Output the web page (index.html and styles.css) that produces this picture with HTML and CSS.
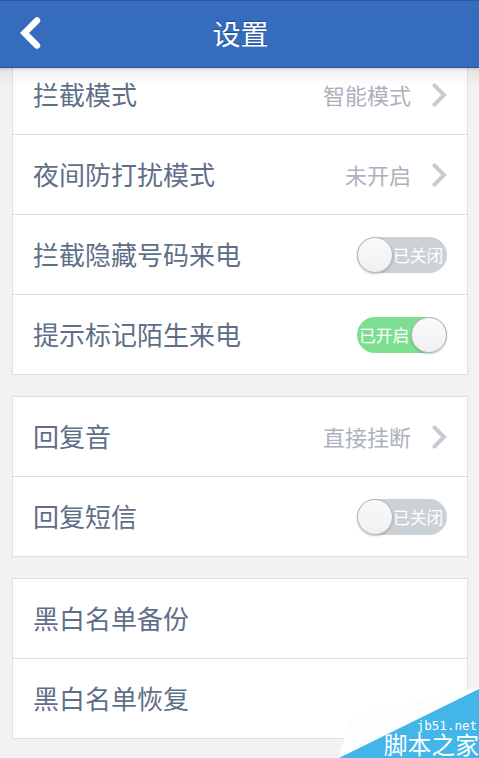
FILE: index.html
```html
<!DOCTYPE html>
<html lang="zh-CN">
<head>
<meta charset="utf-8">
<title>设置</title>
<link rel="stylesheet" href="styles.css">
</head>
<body>
<div class="screen">
  <header class="header">
    <svg class="back" width="22" height="32" viewBox="0 0 22 32"><path d="M17 3.500 4.500 16 17 28.500"/></svg>
    <h1 class="title">设置</h1>
  </header>
  <main class="content">
    <section class="card">
      <div class="row"><span class="label">拦截模式</span><span class="value">智能模式</span><svg class="chevron" width="15" height="24" viewBox="0 0 15 24"><path d="M2.500 2.500 12 12l-9.500 9.500"/></svg></div>
      <div class="row"><span class="label">夜间防打扰模式</span><span class="value">未开启</span><svg class="chevron" width="15" height="24" viewBox="0 0 15 24"><path d="M2.500 2.500 12 12l-9.500 9.500"/></svg></div>
      <div class="row"><span class="label">拦截隐藏号码来电</span><span class="toggle"><span class="knob"></span><span class="state">已关闭</span></span></div>
      <div class="row"><span class="label">提示标记陌生来电</span><span class="toggle on"><span class="knob"></span><span class="state">已开启</span></span></div>
    </section>
    <section class="card">
      <div class="row"><span class="label">回复音</span><span class="value">直接挂断</span><svg class="chevron" width="15" height="24" viewBox="0 0 15 24"><path d="M2.500 2.500 12 12l-9.500 9.500"/></svg></div>
      <div class="row"><span class="label">回复短信</span><span class="toggle"><span class="knob"></span><span class="state">已关闭</span></span></div>
    </section>
    <section class="card">
      <div class="row"><span class="label">黑白名单备份</span></div>
      <div class="row"><span class="label">黑白名单恢复</span></div>
    </section>
  </main>
  <div class="watermark">
    <svg class="corner" width="141" height="71" viewBox="0 0 141 71"><path class="paper" d="M0 71 14 28 141 0v4z"/><path class="ribbon" d="M1 71 141 2v69z"/></svg>
    <div class="site">jb51.net</div>
    <div class="brand">脚本之家</div>
  </div>
</div>
</body>
</html>
```
FILE: styles.css
```css
* { box-sizing: border-box; }
body {
  margin: 0;
  background: #f2f2f2;
  font-family: "Noto Sans CJK SC", sans-serif;
}
.screen {
  position: relative;
  display: flex;
  flex-direction: column;
  height: 758px;
  overflow: hidden;
}
.header {
  flex: none;
  display: flex;
  align-items: center;
  height: 68px;
  padding: 0 20px;
  background: #356cbe;
  border-top: 1px solid #2b569b;
  border-bottom: 1px solid #27539a;
}
.back {
  flex: none;
  margin-bottom: 3px;
  fill: none;
  stroke: #fff;
  stroke-width: 6.500px;
  stroke-linecap: round;
}
.title {
  flex: 1;
  margin: 0 20px 3px 0;
  text-align: center;
  font-size: 28px;
  font-weight: 400;
  line-height: 40px;
  color: #fff;
  text-shadow: 0 -1px 1px #234d91;
}
.content {
  position: relative;
  flex: 1;
  display: flex;
  flex-direction: column;
  gap: 21px;
  padding: 0 11px 0 12px;
  overflow: hidden;
}
.content::before {
  content: "";
  position: absolute;
  inset: 0 0 auto;
  height: 18px;
  background: linear-gradient(rgba(0,0,0,.16) 0, rgba(0,0,0,.05) 3px, rgba(0,0,0,.03) 9px, transparent);
}
.card {
  flex: none;
  background: #fff;
  border: 1px solid #dfdfdf;
  border-bottom: 0;
}
.card:first-child { margin-top: -14px; }
.row {
  display: flex;
  align-items: center;
  height: 80px;
  padding: 1px 20px 0;
  border-bottom: 1px solid #dfdfdf;
}
.label {
  flex: 1;
  margin-bottom: 2px;
  font-size: 26px;
  line-height: 38px;
  color: #606f88;
}
.value {
  margin: 0 21px 2px 0;
  font-size: 22px;
  line-height: 32px;
  color: #acb2bc;
}
.chevron {
  fill: none;
  stroke: #c8cad2;
  stroke-width: 4;
  stroke-linecap: round;
}
.toggle {
  display: flex;
  align-items: center;
  width: 90px;
  height: 36px;
  border-radius: 18px;
  background: #cbd1d4;
}
.toggle.on {
  flex-direction: row-reverse;
  background: #7ddf91;
}
.knob {
  flex: none;
  width: 36px;
  height: 36px;
  border: 1px solid #b5b6b9;
  border-radius: 50%;
  background: linear-gradient(#fafafa, #f0f0f0);
  box-shadow: 0 1px 2px rgba(0,0,0,.22);
}
.state {
  flex: 1;
  font-size: 16.800px;
  line-height: 24px;
  color: #fff;
}
.toggle.on .state { padding-left: 2px; }
.watermark {
  position: absolute;
  right: 0;
  bottom: 0;
  width: 141px;
  height: 71px;
  color: #fff;
  text-align: right;
}
.corner {
  position: absolute;
  inset: 0;
}
.paper { fill: #fdfdfd; }
.ribbon { fill: #42b5e9; }
.site {
  position: relative;
  margin-top: 32px;
  padding-right: 2px;
  font-family: "DejaVu Sans Mono", monospace;
  font-size: 12.500px;
  line-height: 14px;
}
.brand {
  position: relative;
  margin-top: -1px;
  font-size: 23.800px;
  line-height: 24px;
}
```
